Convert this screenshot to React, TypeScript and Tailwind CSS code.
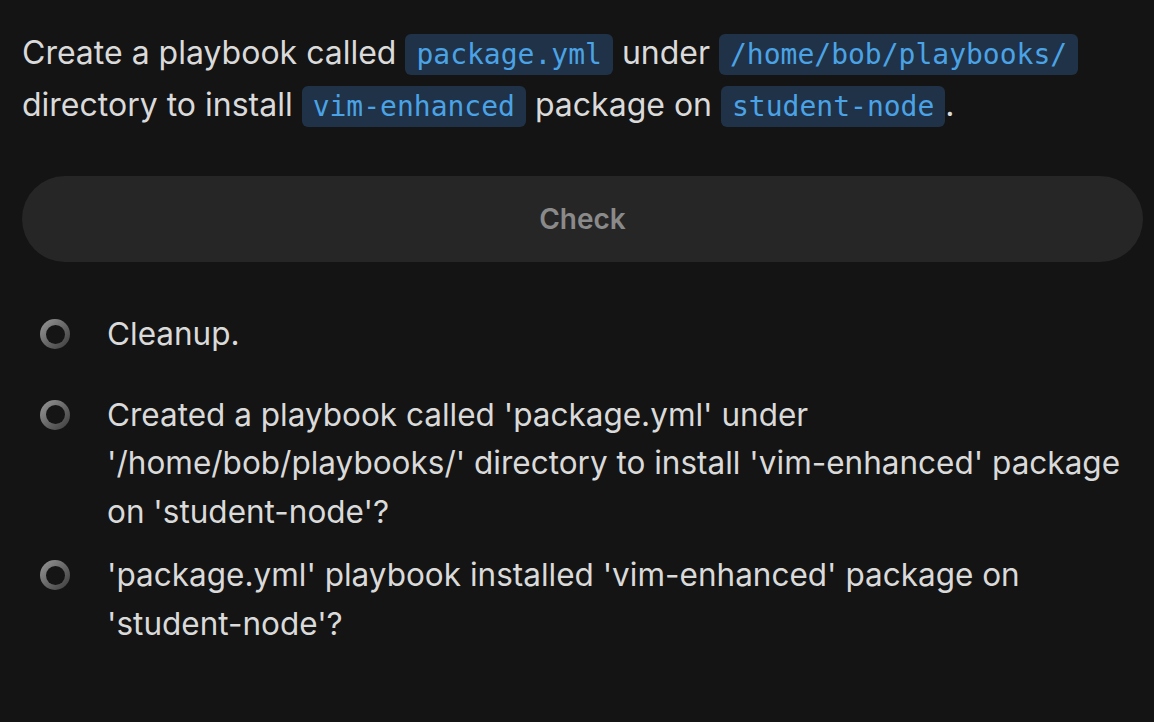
import React from "react";

const SANS = "font-['Inter','Noto_Sans',sans-serif]";
const MONO = "font-['DejaVu_Sans_Mono','Liberation_Mono',monospace]";

function Code({ children }: { children: React.ReactNode }) {
  return (
    <code
      className={`${MONO} text-[28px] text-[#4ba3e6] bg-[#1f3247] rounded-[6px] px-[11px] py-[4px]`}
    >
      {children}
    </code>
  );
}

// radio-ish ring, gray gradient
function Ring() {
  return (
    <div className="h-[48px] flex items-center shrink-0">
      <div className="w-[30px] h-[30px] rounded-full bg-linear-to-br from-[#9a9a9a] to-[#3c3c3c] flex items-center justify-center">
        <div className="w-[19px] h-[19px] rounded-full bg-[#151515]" />
      </div>
    </div>
  );
}

const steps = [
  { text: "Cleanup.", mt: "mt-0" },
  {
    text: "Created a playbook called 'package.yml' under '/home/bob/playbooks/' directory to install 'vim-enhanced' package on 'student-node'?",
    mt: "mt-[32px]",
  },
  {
    text: "'package.yml' playbook installed 'vim-enhanced' package on 'student-node'?",
    mt: "mt-[15px]",
  },
];

export default function App() {
  return (
    <div className={`${SANS} w-full min-h-[722px] bg-[#141414] pl-[22px] pr-[11px] pt-[28px]`}>
      <p className="text-[32px] leading-[50px] text-[#dadada]">
        Create a playbook called <Code>package.yml</Code> under{" "}
        <Code>/home/bob/playbooks/</Code> directory to install{" "}
        <Code>vim-enhanced</Code> package on <Code>student-node</Code>.
      </p>

      <button className="mt-[44px] w-full h-[86px] rounded-full bg-[#262626] text-[28px] font-semibold text-[#8a8a8a]">
        Check
      </button>

      <ul className="mt-[48px] pl-[18px]">
        {steps.map((s) => (
          <li key={s.text} className={`flex gap-[37px] ${s.mt}`}>
            <Ring />
            <span className="text-[31.5px] leading-[48.5px] text-[#dadada] pr-[10px]">
              {s.text}
            </span>
          </li>
        ))}
      </ul>
    </div>
  );
}
